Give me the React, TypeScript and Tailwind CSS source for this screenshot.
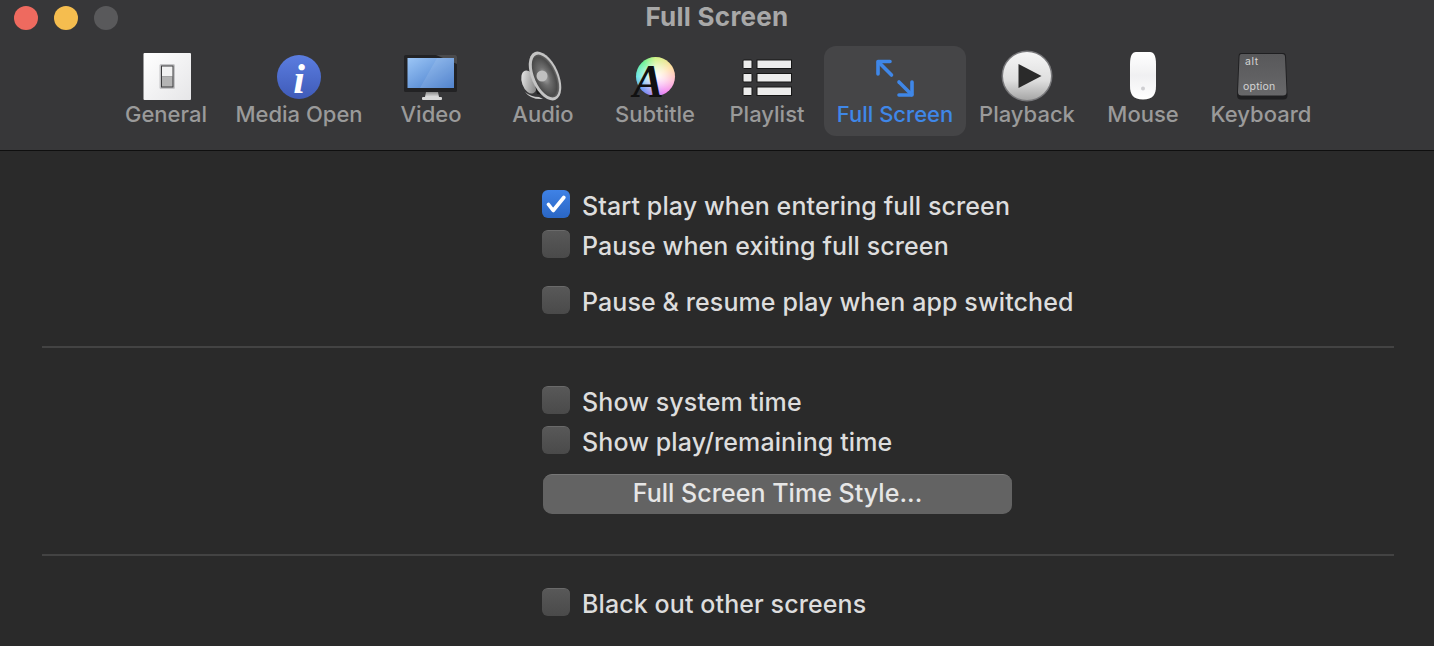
const FONT = "font-['Inter','Liberation_Sans',sans-serif]"

function GeneralIcon() {
  return (
    <svg width="60" height="52" viewBox="0 0 60 52">
      <defs>
        <linearGradient id="gen-bg" x1="0" y1="0" x2="1" y2="1">
          <stop offset="0" stopColor="#ffffff" />
          <stop offset="1" stopColor="#e6e6e8" />
        </linearGradient>
      </defs>
      <rect x="7.5" y="3" width="47.5" height="47" rx="1" fill="url(#gen-bg)" />
      <rect x="23.5" y="14" width="15.5" height="25" rx="1.5" fill="#c4c4c6" />
      <rect x="25" y="15.5" width="12.5" height="22" fill="#3c3c3e" />
      <rect x="26" y="16.5" width="10.5" height="10" fill="#f2f2f2" />
      <rect x="26" y="26.5" width="10.5" height="10" fill="#b4b4b4" />
    </svg>
  )
}

function InfoIcon() {
  return (
    <svg width="60" height="52" viewBox="0 0 60 52">
      <defs>
        <linearGradient id="info-bg" x1="0" y1="0" x2="0" y2="1">
          <stop offset="0" stopColor="#5b7de0" />
          <stop offset="1" stopColor="#3f5bb8" />
        </linearGradient>
      </defs>
      <circle cx="30" cy="27" r="22" fill="url(#info-bg)" />
      <text x="30" y="43" textAnchor="middle" fontFamily="Liberation Serif, serif" fontStyle="italic" fontWeight="700" fontSize="42" fill="#ffffff">i</text>
    </svg>
  )
}

function MonitorIcon() {
  return (
    <svg width="60" height="52" viewBox="0 0 60 52">
      <defs>
        <linearGradient id="mon-bg" x1="0" y1="0" x2="1" y2="1">
          <stop offset="0" stopColor="#9cc6f6" />
          <stop offset="1" stopColor="#3f76c8" />
        </linearGradient>
        <linearGradient id="mon-stand" x1="0" y1="0" x2="0" y2="1">
          <stop offset="0" stopColor="#8a8a8a" />
          <stop offset="1" stopColor="#e0e0e0" />
        </linearGradient>
      </defs>
      <rect x="3" y="5" width="53" height="37" rx="1.5" fill="#222224" />
      <path d="M35 5 H54.5 Q56 5 56 6.5 V14 Z" fill="#4a4a4c" />
      <rect x="6.5" y="8" width="46.5" height="30" fill="url(#mon-bg)" />
      <path d="M19 38 L36 8 H53 V38 Z" fill="#ffffff" opacity="0.1" />
      <path d="M25 42 H37 L38 47 H24 Z" fill="url(#mon-stand)" />
      <rect x="21" y="47" width="20" height="3" rx="1" fill="#d8d8d8" />
    </svg>
  )
}

function SpeakerIcon() {
  return (
    <svg width="60" height="52" viewBox="0 0 60 52">
      <defs>
        <radialGradient id="spk-cone" cx="0.45" cy="0.5" r="0.6">
          <stop offset="0" stopColor="#b0b0b0" />
          <stop offset="0.35" stopColor="#6e6e6e" />
          <stop offset="0.75" stopColor="#4a4a4a" />
          <stop offset="1" stopColor="#808080" />
        </radialGradient>
        <linearGradient id="spk-mag" x1="0" y1="0" x2="1" y2="1">
          <stop offset="0" stopColor="#f4f4f4" />
          <stop offset="1" stopColor="#707070" />
        </linearGradient>
      </defs>
      <ellipse cx="16" cy="32" rx="7" ry="12" transform="rotate(-20 16 32)" fill="url(#spk-mag)" />
      <path d="M19 20 L27 6 L44 47 L24 44 Z" fill="#1e1e1e" />
      <path d="M12 42 Q18 47 26 47 L30 49 Q18 50 12 42 Z" fill="#c8c8c8" />
      <ellipse cx="32" cy="26" rx="13.5" ry="26" transform="rotate(-24 32 26)" fill="#c4c4c4" />
      <ellipse cx="32.5" cy="26" rx="11" ry="23" transform="rotate(-24 32.5 26)" fill="url(#spk-cone)" />
      <circle cx="29" cy="26" r="5.5" fill="#c0c0c0" />
    </svg>
  )
}

function SubtitleIcon() {
  return (
    <div className="relative h-[52px] w-[60px]">
      <div className="absolute left-[11px] top-[7px] h-[39px] w-[39px] rounded-full bg-[conic-gradient(#c8f070,#ffd890_60deg,#ffb0d0_105deg,#f070f0_150deg,#9070f0_190deg,#5080f0_225deg,#50e0e0_270deg,#50f080_320deg,#c8f070)]" />
      <div className="absolute left-[11px] top-[7px] h-[39px] w-[39px] rounded-full bg-[radial-gradient(circle,#ffffff_0%,#ffffffa0_35%,#ffffff00_80%)]" />
      <span className="absolute left-[8px] top-[15px] font-['Liberation_Serif',serif] text-[46px] leading-[34px] font-bold text-[#111111] italic">A</span>
    </div>
  )
}

function PlaylistIcon() {
  return (
    <svg width="60" height="52" viewBox="0 0 60 52">
      {[10, 23.5, 37].map((y) => (
        <g key={y} fill="#ececec" stroke="#161616" strokeWidth="1">
          <rect x="6" y={y} width="9" height="8.5" rx="1" />
          <rect x="20" y={y} width="34.5" height="8.5" />
        </g>
      ))}
    </svg>
  )
}

function ExpandIcon() {
  return (
    <svg width="60" height="52" viewBox="0 0 60 52" fill="none" stroke="#3f87e8" strokeWidth="3.6" strokeLinecap="round" strokeLinejoin="round">
      <path d="M13 24 V11.5 H25" />
      <path d="M13.5 12 L26.5 25" />
      <path d="M47 32 V45 H34" />
      <path d="M34 32 L46.5 44.5" />
    </svg>
  )
}

function PlayIcon() {
  return (
    <svg width="60" height="52" viewBox="0 0 60 52">
      <defs>
        <linearGradient id="play-bg" x1="0" y1="0" x2="0" y2="1">
          <stop offset="0" stopColor="#f6f6f6" />
          <stop offset="0.6" stopColor="#dedede" />
          <stop offset="1" stopColor="#a6a6a6" />
        </linearGradient>
      </defs>
      <circle cx="30" cy="26" r="25.5" fill="#77777a" />
      <circle cx="30" cy="26" r="24" fill="url(#play-bg)" />
      <path d="M21.5 14 L44.5 26 L21.5 38 Z" fill="#2a2a2a" />
    </svg>
  )
}

function MouseIcon() {
  return (
    <svg width="60" height="52" viewBox="0 0 60 52">
      <defs>
        <linearGradient id="mouse-bg" x1="0" y1="0" x2="0" y2="1">
          <stop offset="0" stopColor="#ffffff" />
          <stop offset="0.5" stopColor="#f0f0f2" />
          <stop offset="1" stopColor="#ffffff" />
        </linearGradient>
      </defs>
      <path d="M23 2 H37 C41 2 43 6 43 14 V36 C43 45 40 49 30 49.5 C20 49 17 45 17 36 V14 C17 6 19 2 23 2 Z" fill="url(#mouse-bg)" />
      <circle cx="30" cy="38.5" r="2" fill="#cfcfd2" />
    </svg>
  )
}

function KeyIcon() {
  return (
    <svg width="60" height="52" viewBox="0 0 60 52">
      <defs>
        <linearGradient id="key-bg" x1="0" y1="0" x2="0" y2="1">
          <stop offset="0" stopColor="#58585a" />
          <stop offset="1" stopColor="#68686a" />
        </linearGradient>
      </defs>
      <path d="M10 3 H52 Q55 3 55 7 L56.5 45 Q56.5 49.5 52.5 49.5 H10 Q6 49.5 6 45 L7.5 7 Q7.5 3 10 3 Z" fill="#1f1f21" />
      <path d="M10.5 4 H51 Q54 4 54 7 L55.5 42 Q55.5 45.5 52 45.5 H10.5 Q7 45.5 7 42 L8.5 7 Q8.5 4 10.5 4 Z" fill="url(#key-bg)" />
      <text x="14" y="14.5" fontFamily="Inter, sans-serif" fontSize="10.5" letterSpacing="0.6" fill="#d4d4d4">alt</text>
      <text x="12" y="39.5" fontFamily="Inter, sans-serif" fontSize="10.5" letterSpacing="0.2" fill="#d4d4d4">option</text>
    </svg>
  )
}

const TABS = [
  { label: "General", width: "w-[112px]", icon: <GeneralIcon /> },
  { label: "Media Open", width: "w-[154px]", icon: <InfoIcon /> },
  { label: "Video", width: "w-[110px]", icon: <MonitorIcon /> },
  { label: "Audio", width: "w-[114px]", icon: <SpeakerIcon /> },
  { label: "Subtitle", width: "w-[110px]", icon: <SubtitleIcon /> },
  { label: "Playlist", width: "w-[114px]", icon: <PlaylistIcon /> },
  { label: "Full Screen", width: "w-[142px]", icon: <ExpandIcon />, active: true },
  { label: "Playback", width: "w-[122px]", icon: <PlayIcon /> },
  { label: "Mouse", width: "w-[110px]", icon: <MouseIcon /> },
  { label: "Keyboard", width: "w-[126px]", icon: <KeyIcon /> },
]

function Check({ label, checked }: { label: string; checked?: boolean }) {
  return (
    <label className="flex h-10 items-center gap-3">
      {checked ? (
        <span className="-mt-0.5 flex h-7 w-7 items-center justify-center rounded-[6px] bg-gradient-to-b from-[#3f82e6] to-[#2a66c4]">
          <svg width="20" height="20" viewBox="0 0 20 20" fill="none" stroke="#ffffff" strokeWidth="3.6" strokeLinecap="round" strokeLinejoin="round">
            <path d="M2.5 10.5 L7.2 16.5 L17.8 3.5" />
          </svg>
        </span>
      ) : (
        <span className="-mt-0.5 h-7 w-7 rounded-[6px] border-t border-t-[#6a6a6a] bg-gradient-to-b from-[#585858] to-[#4a4a4a]" />
      )}
      <span className="mt-[3px] text-[25px] font-[450] tracking-[0.1px] text-[#dddddd]">{label}</span>
    </label>
  )
}

export default function App() {
  return (
    <div className={`h-[646px] w-[1434px] overflow-hidden bg-[#2a2a2a] ${FONT}`}>
      <header className="h-[151px] border-b border-b-[#0f0f0f] bg-[#373739]">
        <div className="grid h-9 grid-cols-[1fr_auto_1fr] items-center">
          <div className="flex gap-4 pl-[14px]">
            <span className="h-6 w-6 rounded-full bg-[#ee6a5f]" />
            <span className="h-6 w-6 rounded-full bg-[#f5bd4f]" />
            <span className="h-6 w-6 rounded-full bg-[#59595b]" />
          </div>
          <h1 className="-mt-1 text-[26px] font-bold tracking-[0.25px] text-[#a8a8a8]">Full Screen</h1>
        </div>
        <nav className="mt-[10px] flex justify-center">
          {TABS.map((t) => (
            <div
              key={t.label}
              className={`flex h-[90px] flex-col items-center rounded-[12px] pt-1 ${t.width} ${t.active ? "bg-[#454547] text-[#3f87e8]" : "text-[#9a9a9a]"}`}
            >
              {t.icon}
              <span className="-mt-[2px] text-[22px] leading-7 font-[450] whitespace-nowrap">{t.label}</span>
            </div>
          ))}
        </nav>
      </header>

      <main className="pt-[34px] pr-10 pl-[42px]">
        <section className="pl-[500px]">
          <Check label="Start play when entering full screen" checked />
          <Check label="Pause when exiting full screen" />
          <div className="mt-4">
            <Check label="Pause & resume play when app switched" />
          </div>
        </section>
        <hr className="mt-[25px] h-0.5 border-0 bg-[#434343]" />
        <section className="mt-[33px] pl-[500px]">
          <Check label="Show system time" />
          <Check label="Show play/remaining time" />
          <button className="mt-[13px] ml-px h-10 w-[469px] rounded-[9px] border-t border-t-[#777777] bg-[#636363] pb-0.5 text-[25px] font-[450] tracking-[0.04px] text-[#e6e6e6]">
            Full Screen Time Style...
          </button>
        </section>
        <hr className="mt-10 h-0.5 border-0 bg-[#434343]" />
        <section className="mt-[27px] pl-[500px]">
          <Check label="Black out other screens" />
        </section>
      </main>
    </div>
  )
}
